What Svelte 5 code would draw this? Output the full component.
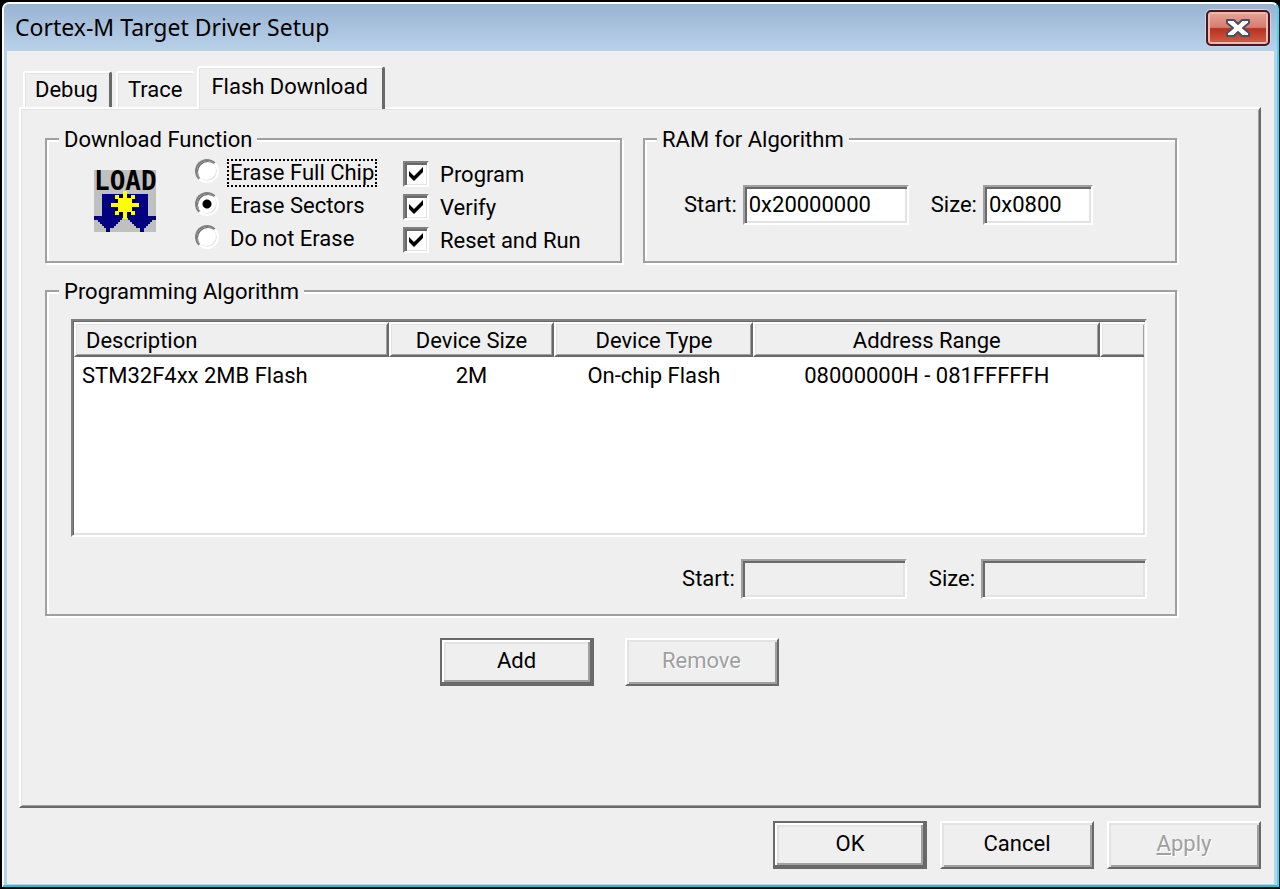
<script>
  let tabs = ['Debug', 'Trace', 'Flash Download'];
  let activeTab = $state('Flash Download');
  let erase = $state('Erase Sectors');
  let eraseModes = ['Erase Full Chip', 'Erase Sectors', 'Do not Erase'];
  let actions = $state([
    { name: 'Program', on: true },
    { name: 'Verify', on: true },
    { name: 'Reset and Run', on: true }
  ]);
  let ramStart = $state('0x20000000');
  let ramSize = $state('0x0800');
  let rows = [['STM32F4xx 2MB Flash', '2M', 'On-chip Flash', '08000000H - 081FFFFFH']];
</script>

<main class="window">
  <div class="frame">
    <header class="titlebar">
      <h1>Cortex-M Target Driver Setup</h1>
      <button class="close" aria-label="Close">
        <svg width="28" height="20" viewBox="0 0 28 20" aria-hidden="true">
          <path d="M3 2H10L14 6L18 2H25V5L19 10L25 15V18H18L14 14L10 18H3V15L9 10L3 5Z" fill="#fff" stroke="#4b4f63" stroke-width="2" stroke-linejoin="round" />
        </svg>
      </button>
    </header>

    <div class="client">
      <div class="tabs" role="tablist">
        {#each tabs as tab}
          <button role="tab" class="tab" class:active={tab === activeTab} aria-selected={tab === activeTab} onclick={() => (activeTab = tab)}>{tab}</button>
        {/each}
      </div>

      <section class="panel">
        <div class="groups">
          <fieldset class="functions">
            <legend>Download Function</legend>
            <svg class="load" width="62" height="62" viewBox="0 0 31 31" shape-rendering="crispEdges" aria-hidden="true">
              <path d="M0 0H31V31H0Z" fill="#c0c0c0" />
              <path d="M4 12H27V23H31V25H29V26H28V27H27V28H26V29H25V31H23V29H21V28H20V27H19V26H18V25H17V24H14V25H13V26H12V27H11V28H10V29H8V31H6V29H5V28H4V27H3V26H2V25H0V23H4Z" fill="#000080" />
              <path d="M10.500 12.500H20.500V22.500H10.500Z" fill="#000" />
              <path d="M14.500 10.500H16.500V14H18.500V12.500H20.500V14.500H19V16.500H22.500V18.500H19V20.500H20.500V22.500H18.500V21H16.500V24.500H14.500V21H12.500V22.500H10.500V20.500H12V18.500H8.500V16.500H12V14.500H10.500V12.500H12.500V14H14.500Z" fill="#ff0" />
              <text x="0" y="10">LOAD</text>
            </svg>
            <div class="choices radios">
              {#each eraseModes as mode, i}
                <label><input type="radio" name="erase" value={mode} bind:group={erase} /><span class:focused={i === 0}>{mode}</span></label>
              {/each}
            </div>
            <div class="choices checks">
              {#each actions as action}
                <label><input type="checkbox" bind:checked={action.on} /><span>{action.name}</span></label>
              {/each}
            </div>
          </fieldset>

          <fieldset class="ram">
            <legend>RAM for Algorithm</legend>
            <div class="fields">
              <label for="ram-start">Start:</label>
              <input id="ram-start" class="box" bind:value={ramStart} />
              <label for="ram-size">Size:</label>
              <input id="ram-size" class="box short" bind:value={ramSize} />
            </div>
          </fieldset>

          <fieldset class="algorithm">
            <legend>Programming Algorithm</legend>
            <div class="list">
              <table>
                <colgroup><col class="c1" /><col class="c2" /><col class="c3" /><col class="c4" /><col /></colgroup>
                <thead>
                  <tr><th>Description</th><th>Device Size</th><th>Device Type</th><th>Address Range</th><th></th></tr>
                </thead>
                <tbody>
                  {#each rows as row}
                    <tr>{#each row as cell}<td>{cell}</td>{/each}<td></td></tr>
                  {/each}
                </tbody>
              </table>
            </div>
            <div class="fields end">
              <label for="alg-start">Start:</label>
              <input id="alg-start" class="box" disabled />
              <label for="alg-size">Size:</label>
              <input id="alg-size" class="box" disabled />
            </div>
          </fieldset>
        </div>

        <div class="actions">
          <button class="push default">Add</button>
          <button class="push" disabled>Remove</button>
        </div>
      </section>

      <footer>
        <button class="push default">OK</button>
        <button class="push">Cancel</button>
        <button class="push" disabled><u>A</u>pply</button>
      </footer>
    </div>
  </div>
</main>

<style>
  :global(body) {
    margin: 0;
    background: #000;
  }
  .window, .window * {
    box-sizing: border-box;
  }
  .window {
    min-height: 100vh;
    padding: 2px 1px 2px 2px;
    display: flex;
    font: 22px/26px Roboto, "Liberation Sans", sans-serif;
    color: #000;
  }
  .frame {
    flex: 1;
    min-width: 0;
    display: flex;
    flex-direction: column;
    border: 2px solid;
    border-color: #fff #35dcf5 #12c9dc #fff;
    border-radius: 7px 7px 0 0;
    background: #b9d1ea;
    overflow: hidden;
  }
  .titlebar {
    height: 47px;
    display: flex;
    align-items: flex-start;
    justify-content: space-between;
    padding: 6px 7px 0 11px;
    background: linear-gradient(#99b3d2, #b9d1ea);
  }
  h1 {
    margin: 0;
    font: 23px/34px "Noto Sans", "Open Sans", sans-serif;
  }
  button, input {
    font: inherit;
    color: inherit;
  }
  .close {
    width: 64px;
    height: 36px;
    padding: 0;
    display: grid;
    place-items: center;
    border: 2px solid #4a1620;
    border-radius: 5px;
    background: linear-gradient(#e5a598, #d67d6e 48%, #b8311f 52%, #d0604a);
    box-shadow: inset 0 0 0 2px #eeb8ac, 0 0 0 1px #c8d8ec;
  }
  .client {
    flex: 1;
    display: flex;
    flex-direction: column;
    margin: 0 3px 1px 3px;
    padding: 15px 13px 15px 12px;
    background: #efefef;
  }
  .tabs {
    display: flex;
    align-items: flex-end;
    padding-left: 4px;
    gap: 4px;
  }
  .tab {
    height: 36px;
    padding: 0 11px 0 10px;
    border: 2px solid;
    border-color: #fff #efefef transparent #fff;
    border-bottom: 0;
    border-radius: 3px 3px 0 0;
    background: #efefef;
    box-shadow: inset 1px 1px #e3e3e3;
  }
  .tab:first-child {
    border-right: 3px solid #696969;
  }
  .tab.active {
    height: 43px;
    margin: 0 0 -2px -2px;
    padding: 0 14px 4px 12px;
    border-right: 3px solid #696969;
    position: relative;
  }
  .panel {
    flex: 1;
    padding: 16px 82px 40px 24px;
    border: 2px solid;
    border-color: #fff #696969 #696969 #fff;
    box-shadow: inset 1px 1px #e3e3e3, inset -1px -1px #a0a0a0;
  }
  .groups {
    display: grid;
    grid-template-columns: 577fr 534fr;
    column-gap: 21px;
    row-gap: 14px;
  }
  fieldset {
    min-width: 0;
    margin: 0;
    padding: 0;
    border: 2px solid #a0a0a0;
    box-shadow: 2px 2px #fff, inset 2px 2px #fff;
  }
  legend {
    margin-left: 12px;
    padding: 2px 5px 0;
    background: #efefef;
  }
  .functions {
    display: flex;
    align-items: flex-start;
    padding: 2px 0 7px;
  }
  .load {
    margin: 15px 39px 0 47px;
    overflow: visible;
    flex: none;
  }
  .load text {
    font: bold 13px "DejaVu Sans Mono", monospace;
  }
  .choices {
    display: flex;
    flex-direction: column;
    gap: 7px;
  }
  .radios {
    width: 208px;
    padding-top: 5px;
  }
  .checks {
    padding-top: 7px;
  }
  .choices label {
    display: flex;
    align-items: center;
    height: 26px;
    gap: 9px;
    white-space: nowrap;
  }
  .choices span {
    padding: 0 2px;
  }
  .focused {
    outline: 2px dotted #000;
    outline-offset: -1px;
  }
  .choices input {
    appearance: none;
    flex: none;
    margin: 0;
    width: 24px;
    height: 24px;
    border: 2px solid;
    border-color: #808080 #fff #fff #808080;
    background: #fff center / 20px 20px no-repeat;
    box-shadow: inset 2px 2px #696969, inset -1px -1px #e3e3e3;
  }
  .checks input {
    width: 26px;
    height: 26px;
    margin-bottom: 2px;
  }
  .radios input {
    border-radius: 50%;
    margin-bottom: 4px;
    box-shadow: inset 1px 1px #696969, inset -1px -1px #e3e3e3;
  }
  .radios input:checked {
    background-image: radial-gradient(circle, #000 4px, transparent 5px);
  }
  .checks input:checked {
    background-image: url("data:image/svg+xml,%3Csvg xmlns='http://www.w3.org/2000/svg' viewBox='0 0 20 20'%3E%3Cpath d='M3 7L8 12L17 3V8L8 17L3 12Z'/%3E%3C/svg%3E");
  }
  .ram {
    padding: 32px 0 36px;
  }
  .ram .fields {
    margin-left: 39px;
  }
  .fields {
    display: flex;
    align-items: center;
    gap: 6px;
  }
  .fields.end {
    justify-content: flex-end;
    margin: 0 28px;
  }
  .fields label {
    min-width: 50px;
  }
  .fields .box + label {
    min-width: 46px;
    margin-left: 16px;
  }
  .box {
    width: 166px;
    height: 40px;
    min-width: 0;
    padding: 0 4px 2px;
    border: 2px solid;
    border-color: #a0a0a0 #fff #fff #a0a0a0;
    border-radius: 0;
    background: #fff;
    box-shadow: inset 2px 2px #696969, inset -2px -2px #e3e3e3;
    outline: 0;
  }
  .box:disabled {
    background: #efefef;
  }
  .short {
    width: 110px;
  }
  .algorithm {
    grid-column: 1 / -1;
    padding: 14px 0 15px;
  }
  .list {
    height: 218px;
    margin: 0 28px 22px 24px;
    padding: 1px;
    border: 2px solid;
    border-color: #808080 #fff #fff #808080;
    background: #fff;
    box-shadow: inset 1px 1px #696969, inset -2px -2px #e3e3e3;
  }
  table {
    width: 100%;
    table-layout: fixed;
    border-collapse: separate;
    border-spacing: 0;
  }
  .c1 { width: 29.4%; }
  .c2 { width: 15.5%; }
  .c3 { width: 18.6%; }
  .c4 { width: 32.4%; }
  th {
    height: 35px;
    padding: 2px 0 0;
    font-weight: 400;
    border: 2px solid;
    border-color: #fff #696969 #696969 #fff;
    background: #efefef;
    box-shadow: inset 1px 1px #e3e3e3, inset -1px -1px #a0a0a0;
  }
  th:last-child {
    border-right: 0;
  }
  th:first-child {
    padding-left: 10px;
    text-align: left;
  }
  td {
    height: 38px;
    padding: 0;
    text-align: center;
  }
  td:first-child {
    padding-left: 8px;
    text-align: left;
  }
  .actions {
    display: flex;
    justify-content: center;
    gap: 31px;
    margin-top: 22px;
    padding-right: 4px;
  }
  .push {
    width: 154px;
    height: 48px;
    padding: 0 0 2px;
    border: 2px solid;
    border-color: #fff #696969 #696969 #fff;
    border-radius: 0;
    background: #efefef;
    box-shadow: inset 2px 2px #e3e3e3, inset -2px -2px #a0a0a0;
  }
  .push.default {
    border-color: #696969;
    box-shadow: inset -2px -2px #696969, inset 2px 2px #fff, inset -4px -4px #a0a0a0, inset 4px 4px #e3e3e3;
  }
  .push:disabled {
    color: #a0a0a0;
    text-shadow: 1px 1px #fff;
  }
  footer {
    display: flex;
    justify-content: flex-end;
    gap: 13px;
    margin-top: 13px;
  }
</style>
